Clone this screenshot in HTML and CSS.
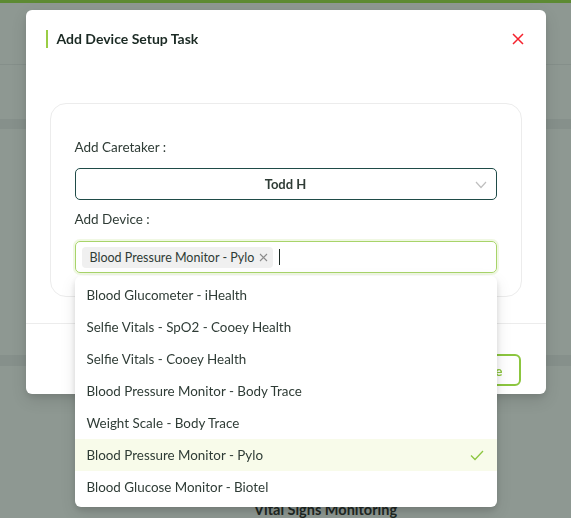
FILE: index.html
```html
<!DOCTYPE html>
<html lang="en">
<head>
  <meta charset="UTF-8" />
  <meta name="viewport" content="width=device-width, initial-scale=1.0"/>
  <title>Add Device Setup Task</title>
  <link rel="stylesheet" href="styles.css">
</head>
<body>
  <div class="page">
    <div class="topbar"></div>
    <div class="header"></div>
    <div class="band band-one"></div>
    <div class="band band-two"></div>
    <div class="section-title">Vital Signs Monitoring</div>
  </div>

  <div class="mask">
    <div class="modal">
      <div class="modal-header">
        <div class="modal-title">Add Device Setup Task</div>
        <button class="close-btn" aria-label="Close">
          <svg width="12" height="12" viewBox="0 0 12 12">
            <path d="M1 1 L11 11 M11 1 L1 11" stroke="#f5222d" stroke-width="1.5" fill="none"/>
          </svg>
        </button>
      </div>

      <div class="modal-body">
        <div class="form-card">
          <div class="field-label">Add Caretaker :</div>
          <div class="select">
            <span class="select-value">Todd H</span>
            <svg class="chevron" width="12" height="8" viewBox="0 0 12 8">
              <path d="M1 1 L6 6.5 L11 1" stroke="#bfbfbf" stroke-width="1.2" fill="none"/>
            </svg>
          </div>
          <div class="field-label">Add Device :</div>
          <div class="multi-select">
            <span class="tag">
              Blood Pressure Monitor - Pylo
              <svg class="tag-close" width="9" height="9" viewBox="0 0 9 9">
                <path d="M1 1 L8 8 M8 1 L1 8" stroke="#8c8c8c" stroke-width="1.1" fill="none"/>
              </svg>
            </span>
            <span class="cursor"></span>

            <div class="dropdown">
              <div class="option">Blood Glucometer - iHealth</div>
              <div class="option">Selfie Vitals - SpO2 - Cooey Health</div>
              <div class="option">Selfie Vitals - Cooey Health</div>
              <div class="option">Blood Pressure Monitor - Body Trace</div>
              <div class="option">Weight Scale - Body Trace</div>
              <div class="option selected">
                Blood Pressure Monitor - Pylo
                <svg width="14" height="11" viewBox="0 0 14 11">
                  <path d="M1 5.5 L5 9.5 L13 1" stroke="#8cc63f" stroke-width="1.3" fill="none"/>
                </svg>
              </div>
              <div class="option">Blood Glucose Monitor - Biotel</div>
            </div>
          </div>
        </div>
      </div>

      <div class="modal-footer">
        <button class="save-btn">Save</button>
      </div>
    </div>
  </div>
</body>
</html>
```

FILE: styles.css
```css
* {
  box-sizing: border-box;
}

body {
  margin: 0;
  font-family: Lato, 'Noto Sans', sans-serif;
  background: #8e9892;
  overflow: hidden;
}

.page {
  height: 518px;
  display: flex;
  flex-direction: column;
}

.topbar {
  height: 3px;
  background: #5d8a33;
}

.header {
  height: 63px;
  border-bottom: 1px solid #858f8a;
}

.band {
  height: 11px;
  background: #86908b;
}

.band-one {
  margin-top: 54px;
}

.band-two {
  margin-top: 226px;
}

.section-title {
  margin-top: 135px;
  padding-left: 80px;
  text-align: center;
  font-size: 14.5px;
  font-weight: 700;
  color: #1f2824;
}

.mask {
  position: fixed;
  inset: 0;
  display: flex;
  justify-content: center;
  padding-top: 10px;
}

.modal {
  width: 520px;
  height: 384px;
  background: #fff;
  border-radius: 6px;
  box-shadow: 0 6px 16px rgba(0, 0, 0, 0.12), 0 3px 6px rgba(0, 0, 0, 0.08);
  display: flex;
  flex-direction: column;
}

.modal-header {
  display: flex;
  justify-content: space-between;
  align-items: center;
  padding: 20px 22px 0 20px;
}

.modal-title {
  border-left: 2px solid #9acd45;
  padding-left: 9px;
  font-size: 14px;
  font-weight: 700;
  line-height: 18px;
  color: #1b2a24;
}

.close-btn {
  background: none;
  border: none;
  padding: 0;
  display: flex;
  cursor: pointer;
}

.modal-body {
  padding: 55px 24px 16px;
}

.form-card {
  border: 1px solid #ececec;
  border-radius: 16px;
  padding: 32px 24px 23px;
  display: flex;
  flex-direction: column;
}

.field-label {
  font-size: 13.5px;
  line-height: 22px;
  color: #2f3c36;
}

.select {
  margin: 10px 0 8px;
  height: 32px;
  border: 1.5px solid #1f4b48;
  border-radius: 5px;
  display: flex;
  align-items: center;
  justify-content: center;
  position: relative;
}

.select-value {
  font-size: 13px;
  font-weight: 700;
  color: #2f3c36;
}

.chevron {
  position: absolute;
  right: 9px;
  top: 12px;
}

.multi-select {
  margin-top: 11px;
  height: 32px;
  border: 1.5px solid #a8d46a;
  border-radius: 5px;
  box-shadow: 0 0 0 2px rgba(154, 205, 69, 0.15);
  display: flex;
  align-items: center;
  gap: 6px;
  padding: 0 6px;
  position: relative;
}

.tag {
  height: 21px;
  background: #f0f0f0;
  border-radius: 4px;
  padding: 0 5px 0 8px;
  display: flex;
  align-items: center;
  gap: 5px;
  font-size: 12.5px;
  color: #2f3c36;
}

.cursor {
  width: 1px;
  height: 16px;
  background: #1b2a24;
}

.dropdown {
  position: absolute;
  top: calc(100% + 4px);
  left: -1px;
  right: -1px;
  background: #fff;
  border-radius: 6px;
  padding: 3px 0 4px;
  box-shadow: 0 6px 16px rgba(0, 0, 0, 0.1), 0 3px 6px rgba(0, 0, 0, 0.12);
  z-index: 2;
}

.option {
  height: 32px;
  padding: 0 13px 0 12px;
  display: flex;
  align-items: center;
  justify-content: space-between;
  font-size: 13.4px;
  color: #2f3c36;
}

.option.selected {
  background: #f8fbea;
}

.modal-footer {
  margin-top: auto;
  border-top: 1px solid #ececec;
  height: 71px;
  flex-shrink: 0;
  display: flex;
  justify-content: flex-end;
  padding: 30px 25px 0;
}

.save-btn {
  height: 32px;
  padding: 0 16px;
  background: #fff;
  border: 2px solid #8cc63f;
  border-radius: 6px;
  color: #8cc63f;
  font-family: inherit;
  font-size: 14px;
  font-weight: 700;
}
```
